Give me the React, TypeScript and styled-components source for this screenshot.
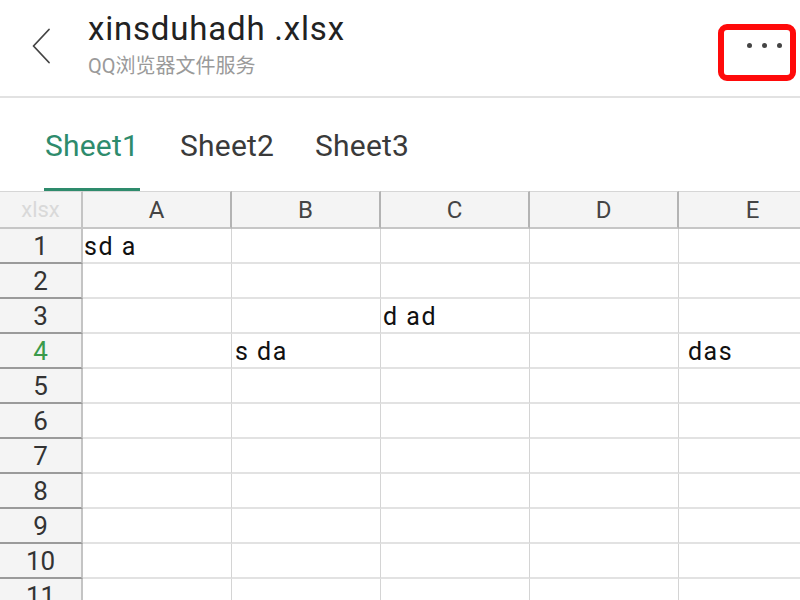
import React from "react";
import styled, { createGlobalStyle } from "styled-components";

const GlobalStyle = createGlobalStyle`
  html, body {
    margin: 0;
    padding: 0;
    background: #ffffff;
    font-family: Roboto, "Noto Sans", "Noto Sans CJK SC", sans-serif;
    overflow: hidden;
  }
`;

const Page = styled.div`
  width: 800px;
  height: 600px;
  overflow: hidden;
  display: flex;
  flex-direction: column;
  background: #fff;
`;

const Header = styled.header`
  height: 98px;
  box-sizing: border-box;
  border-bottom: 2px solid #e2e2e2;
  display: flex;
  align-items: flex-start;
`;

const BackButton = styled.div`
  width: 88px;
  box-sizing: border-box;
  padding: 28px 0 0 31px;
  svg {
    display: block;
  }
`;

const TitleBlock = styled.div`
  flex: 1;
  padding-top: 10px;
  display: flex;
  flex-direction: column;
  gap: 6px;
`;

const Title = styled.div`
  font-size: 33px;
  line-height: 38px;
  letter-spacing: 0.8px;
  color: #222;
`;

const Subtitle = styled.div`
  font-family: Roboto, "Noto Sans CJK SC", sans-serif;
  font-size: 20px;
  line-height: 24px;
  color: #9a9a9a;
`;

const MoreButton = styled.div`
  margin: 24px 4px 0 0;
  width: 78px;
  height: 57px;
  box-sizing: border-box;
  border: 6px solid #ff0a0a;
  border-radius: 9px;
  display: flex;
  justify-content: flex-end;
  align-items: flex-start;
  padding: 13px 8px 0 0;
  gap: 10px;
`;

const Dot = styled.span`
  width: 5px;
  height: 5px;
  border-radius: 50%;
  background: #444;
`;

const TabBar = styled.nav`
  height: 93px;
  box-sizing: border-box;
  display: flex;
  padding-left: 44px;
  gap: 39px;
`;

const Tab = styled.div<{ $active?: boolean }>`
  height: 93px;
  box-sizing: border-box;
  padding: 31px 1px 0;
  font-size: 30px;
  line-height: 34px;
  letter-spacing: 0.2px;
  color: ${(p) => (p.$active ? "#2e8b6c" : "#3a3a3a")};
  border-bottom: 3px solid ${(p) => (p.$active ? "#2e8b6c" : "transparent")};
`;

const Sheet = styled.div`
  flex: 1;
  overflow: hidden;
  display: grid;
  grid-template-columns: 83px repeat(5, 149px);
  grid-template-rows: 38px;
  grid-auto-rows: 35px;
`;

const ColHead = styled.div<{ $corner?: boolean }>`
  box-sizing: border-box;
  background: #f4f4f4;
  border-top: 1px solid #d6d6d6;
  border-right: 2px solid ${(p) => (p.$corner ? "#c4c4c4" : "#b3b3b3")};
  border-bottom: 2px solid #c6c6c6;
  display: flex;
  align-items: center;
  justify-content: center;
  font-size: ${(p) => (p.$corner ? "22px" : "24px")};
  color: ${(p) => (p.$corner ? "#d9d9d9" : "#444")};
`;

const RowHead = styled.div<{ $active?: boolean }>`
  box-sizing: border-box;
  background: #f4f4f4;
  border-right: 2px solid #c4c4c4;
  border-bottom: 2px solid #9a9a9a;
  display: flex;
  align-items: center;
  justify-content: center;
  font-size: 26px;
  padding-top: 1px;
  color: ${(p) => (p.$active ? "#3b9a4b" : "#333")};
`;

const Cell = styled.div<{ $indent?: number }>`
  box-sizing: border-box;
  border-right: 1px solid #d4d4d4;
  border-bottom: 2px solid #e2e2e2;
  display: flex;
  align-items: center;
  padding: 2px 0 0 ${(p) => p.$indent ?? 1}px;
  font-size: 25px;
  letter-spacing: 1.5px;
  color: #111;
  white-space: nowrap;
`;

const columns = ["A", "B", "C", "D", "E"];
const data: Record<string, { text: string; indent: number }> = {
  "1A": { text: "sd a", indent: 1 },
  "3C": { text: "d ad", indent: 2 },
  "4B": { text: "s da", indent: 3 },
  "4E": { text: "das", indent: 9 },
};

export default function App() {
  const rows = Array.from({ length: 12 }, (_, i) => i + 1);
  return (
    <>
      <GlobalStyle />
      <Page>
        <Header>
          <BackButton>
            <svg width="22" height="38" viewBox="0 0 22 38">
              <path
                d="M18 1.5 L2.5 18 L18 34.5"
                fill="none"
                stroke="#444"
                strokeWidth="1.8"
                strokeLinecap="round"
                strokeLinejoin="round"
              />
            </svg>
          </BackButton>
          <TitleBlock>
            <Title>xinsduhadh .xlsx</Title>
            <Subtitle>QQ浏览器文件服务</Subtitle>
          </TitleBlock>
          <MoreButton>
            <Dot />
            <Dot />
            <Dot />
          </MoreButton>
        </Header>
        <TabBar>
          <Tab $active>Sheet1</Tab>
          <Tab>Sheet2</Tab>
          <Tab>Sheet3</Tab>
        </TabBar>
        <Sheet>
          <ColHead $corner>xlsx</ColHead>
          {columns.map((c) => (
            <ColHead key={c}>{c}</ColHead>
          ))}
          {rows.map((r) => (
            <React.Fragment key={r}>
              <RowHead $active={r === 4}>{r}</RowHead>
              {columns.map((c) => {
                const d = data[`${r}${c}`];
                return (
                  <Cell key={c} $indent={d?.indent}>
                    {d?.text ?? ""}
                  </Cell>
                );
              })}
            </React.Fragment>
          ))}
        </Sheet>
      </Page>
    </>
  );
}
